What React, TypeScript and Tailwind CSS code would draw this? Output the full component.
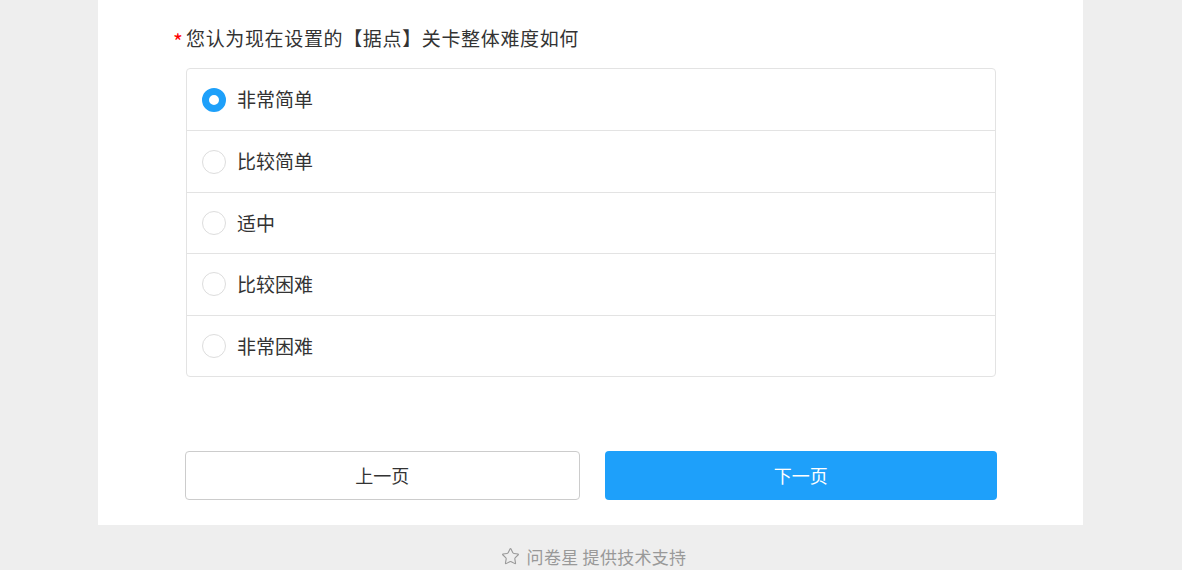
import React, { useState } from 'react';
import { Star } from 'lucide-react';

const options = ['非常简单', '比较简单', '适中', '比较困难', '非常困难'];

export default function App() {
  const [selected, setSelected] = useState(0);

  return (
    <div
      className="min-h-[570px] bg-[#eeeeee] flex flex-col"
      style={{ fontFamily: '"Noto Sans CJK SC", "Noto Sans", sans-serif' }}
    >
      {/* Survey panel */}
      <div className="w-[985px] ml-[98px] bg-white pt-[26px] pb-[25px]">
        <div className="pl-[75px] flex items-center h-[24px] text-[19px] text-[#333333]">
          <span className="text-[#ff0000] text-[21px] w-[13px] leading-none pt-[6px]">*</span>
          <span className="tracking-[0.65px]">您认为现在设置的【据点】关卡整体难度如何</span>
        </div>

        {/* Options */}
        <div className="ml-[88px] mt-[18px] w-[810px] border border-[#e3e3e3] rounded-[4px] flex flex-col">
          {options.map((opt, i) => (
            <div
              key={opt}
              onClick={() => setSelected(i)}
              className={`h-[61.4px] flex items-center pl-[15px] cursor-pointer ${i > 0 ? 'border-t border-[#e3e3e3]' : ''}`}
            >
              {selected === i ? (
                <span className="w-[24px] h-[24px] rounded-full border-[7px] border-[#1ea0fa] bg-white shrink-0" />
              ) : (
                <span className="w-[24px] h-[24px] rounded-full border border-[#dddddd] bg-white shrink-0" />
              )}
              <span className="ml-[11px] text-[19px] text-[#333333]">{opt}</span>
            </div>
          ))}
        </div>

        {/* Paging buttons */}
        <div className="ml-[87px] mt-[74px] w-[812px] flex gap-[25px]">
          <button className="flex-1 h-[49px] rounded-[4px] border border-[#cccccc] bg-white text-[18px] text-[#333333] flex items-center justify-center">
            上一页
          </button>
          <button className="flex-1 h-[49px] rounded-[4px] bg-[#1ea0fa] text-[18px] text-white flex items-center justify-center">
            下一页
          </button>
        </div>
      </div>

      {/* Footer */}
      <div className="pt-[20px] pl-[5px] flex items-center justify-center gap-[7px] text-[17px] text-[#999999] h-[24px] box-content">
        <Star className="w-[19px] h-[19px]" strokeWidth={1.4} />
        <span className="tracking-[0.3px]">问卷星 提供技术支持</span>
      </div>
    </div>
  );
}
